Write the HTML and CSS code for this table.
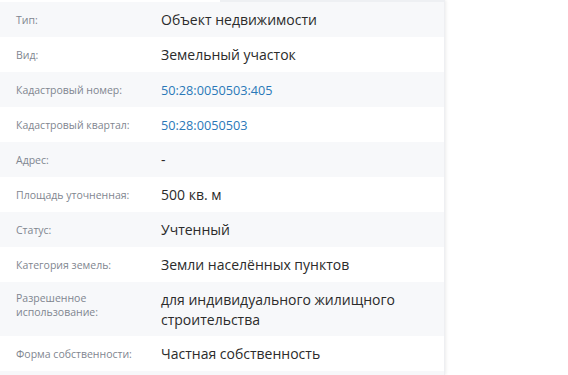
FILE: index.html
```html
<!DOCTYPE html>
<html lang="ru">
<head>
<meta charset="utf-8">
<link rel="stylesheet" href="styles.css">
</head>
<body>
<div class="panel">
  <div class="topstrip"></div>
  <div class="row alt"><div class="label">Тип:</div><div class="value">Объект недвижимости</div></div>
  <div class="row"><div class="label">Вид:</div><div class="value">Земельный участок</div></div>
  <div class="row alt"><div class="label">Кадастровый номер:</div><div class="value"><a class="link" href="#">50:28:0050503:405</a></div></div>
  <div class="row"><div class="label">Кадастровый квартал:</div><div class="value"><a class="link" href="#">50:28:0050503</a></div></div>
  <div class="row alt"><div class="label">Адрес:</div><div class="value">-</div></div>
  <div class="row"><div class="label">Площадь уточненная:</div><div class="value">500 кв. м</div></div>
  <div class="row alt"><div class="label">Статус:</div><div class="value">Учтенный</div></div>
  <div class="row"><div class="label">Категория земель:</div><div class="value">Земли населённых пунктов</div></div>
  <div class="row alt tall"><div class="label">Разрешенное<br>использование:</div><div class="value">для индивидуального жилищного строительства</div></div>
  <div class="row"><div class="label">Форма собственности:</div><div class="value">Частная собственность</div></div>
  <div class="row alt end"></div>
</div>
</body>
</html>
```
FILE: styles.css
```css
html, body {
  margin: 0;
  padding: 0;
  background: #ffffff;
  height: 375px;
  overflow: hidden;
}
body {
  font-family: "Open Sans", "Noto Sans", sans-serif;
}
.panel {
  width: 444px;
  height: 375px;
  overflow: hidden;
  box-shadow: 1px 0 3px rgba(0, 0, 0, 0.08);
  border-right: 1px solid #eeeff2;
  display: flex;
  flex-direction: column;
}
.topstrip {
  height: 2px;
  flex-shrink: 0;
  margin-left: 220px;
  background: #eef0f3;
}
.row {
  display: flex;
  align-items: center;
  height: 35px;
  flex-shrink: 0;
  background: #ffffff;
}
.row.alt {
  background: #f7f8fa;
}
.row.end {
  height: 4px;
}
.row.tall {
  height: 54px;
  align-items: flex-start;
  padding-top: 9px;
  box-sizing: border-box;
}
.label {
  width: 145px;
  padding-left: 16px;
  flex-shrink: 0;
  font-size: 10.5px;
  line-height: 14px;
  color: #7f8690;
}
.value {
  flex: 1;
  padding-right: 40px;
  font-size: 14px;
  line-height: 20px;
  color: #2b2b2b;
}
.tall .value {
  margin-top: -1px;
}
.link {
  color: #2a78b8;
  text-decoration: none;
  font-size: 12.7px;
}
```
